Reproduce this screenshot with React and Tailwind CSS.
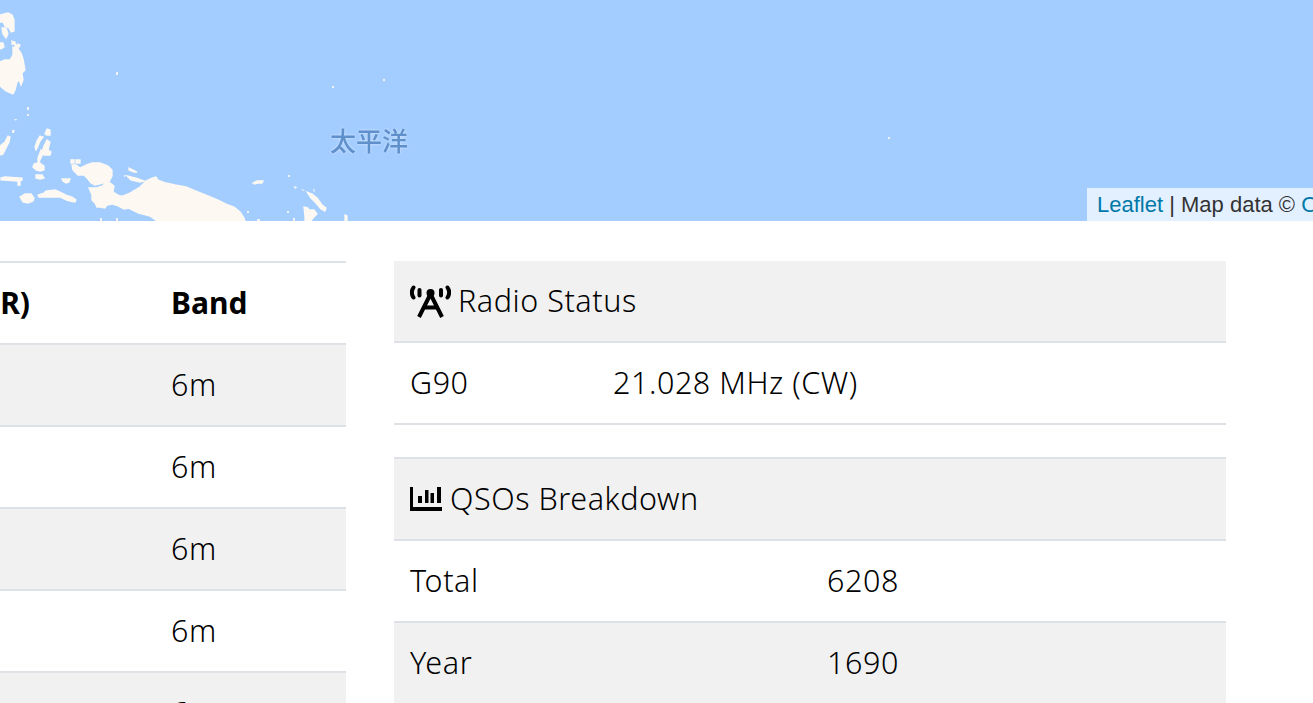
const land = [
  "M0 15L8 13L12 15L14 20L14 31L11 32L9 28L5 26L3 22L0 22Z",
  "M2 28L6 28L8 34L6 38L3 34Z","M0 43L3 43L4 47L1 49L0 48Z","M12 41L15 42L15 44L12 44Z","M15 44L18 46L18 48L15 47Z","M18 44L20 45L19 47Z",
  "M13 47L18 49L21 53L23 59L25 70L22 73L23 80L21 85L19 80L17 82L15 90L13 94L6 91L0 86L0 62L5 60L10 60L13 55Z",
  "M8 136L10 137L9 142L6 148L3 154L1 155L0 154L0 146L5 142Z",
  "M47 129L50 130L50 135L47 135L45 134Z","M40 136L43 137L40 141L38 146L36 150L35 147L37 141Z",
  "M47 140L50 142L48 150L51 152L50 155L44 155L42 152L44 146Z",
  "M41 150L43 153L41 158L39 162L41 164L44 166L44 170L40 171L36 170L33 167L34 164L38 163L38 158Z",
  "M1 178L5 177L22 178L22 180L20 181L20 185L18 185L18 181L1 180Z",
  "M36 175L42 175L44 178L40 179L36 178Z","M62 179L70 179L69 182L66 183L63 181Z",
  "M20 197L25 194L31 194L34 198L33 201L28 203L23 202Z",
  "M38 195L44 193L46 191L55 190L60 192L66 195L72 197L76 200L75 202L70 201L66 200L60 197L55 197L50 197L44 197L39 197Z",
  "M71 160L74 160L74 163L71 163Z","M76 160L80 160L80 163L76 163Z",
  "M72 165L76 165L80 168L86 165L92 163L100 163L108 166L112 170L112 176L109 182L103 183L95 185L91 183L88 179L84 175L78 175L73 170Z",
  "M89 188L96 188L102 186L106 183L110 183L114 186L113 192L118 195L124 197L130 199L130 208L124 209L118 206L112 204L107 205L105 208L100 207L97 207L95 203L92 200L92 195Z",
  "M120 197L130 193L140 187L146 181L152 178L156 177L158 180L166 183L175 185L186 187L196 191L206 195L218 200L226 204L234 207L240 212L244 218L245 221L157 221L150 216L138 213L128 208L120 205Z",
  "M129 168L133 170L137 172L134 172L129 170Z","M127 176L136 178L144 181L140 182L131 180Z",
  "M253 183L257 181L263 181L262 183L258 183L255 184Z",
  "M307 192L312 194L317 198L322 205L326 208L325 211L321 209L316 203L311 198Z",
  "M304 207L308 208L309 210L314 210L317 214L313 218L311 221L305 221L305 217Z","M345 215L347 216L347 221L345 221Z",
];
const dots = [
  "M124 175L125 175L125 177L124 177Z",
  "M288 175L290 175L290 177L288 177Z","M294 186L297 187L296 189L294 188Z","M301 189L305 190L303 191Z","M314 188L315 192L313 191Z",
  "M116 72L118 72L118 75L116 75Z","M27 107L29 107L29 110L27 110Z","M27 114L29 114L29 116L27 116Z","M14 119L17 119L16 121Z","M12 130L15 130L14 133L12 133Z",
  "M383 79L385 79L385 81L383 81Z","M332 86L334 86L334 88L332 88Z","M888 137L890 137L890 139L888 139Z",
  "M247 211L249 211L249 213L247 213Z","M287 211L289 211L289 213L287 213Z","M257 219L260 219L260 221L257 221Z","M293 218L295 218L295 221L293 221Z","M100 218L102 218L102 221L100 221Z","M116 218L118 218L118 221L116 221Z",
];

function Cell({ className = "", children }) {
  return <div className={"flex items-center px-4 pb-[2px] whitespace-nowrap " + className}>{children}</div>;
}

function Tower() {
  return (
    <svg width="41" height="33" viewBox="0 0 41 33" className="mr-[7px] shrink-0" fill="none" stroke="currentColor" strokeWidth="4">
      <path d="M3.5 2.5C1.5 5.5 1.5 9.5 3.5 12.5" strokeLinecap="round" />
      <path d="M9.5 5V10.5" strokeLinecap="round" />
      <path d="M37.5 2.5C39.5 5.5 39.5 9.5 37.5 12.5" strokeLinecap="round" />
      <path d="M31 5V10.5" strokeLinecap="round" />
      <circle cx="20.5" cy="8" r="4" fill="currentColor" stroke="none" />
      <path d="M20.5 9L9 32M20.5 9L32 32M14 22.5H27" />
    </svg>
  );
}

function Bars() {
  return (
    <svg width="33" height="25" viewBox="0 0 33 25" className="mr-[7px] shrink-0" fill="currentColor">
      <path d="M0 0H3V20H32V24H0Z" />
      <rect x="8" y="9" width="4" height="7" />
      <rect x="15" y="3" width="3.5" height="13" />
      <rect x="20.5" y="6" width="3.5" height="10" />
      <rect x="27" y="0" width="4" height="16" />
    </svg>
  );
}

export default function App() {
  const rows = [true, false, true, false, true];
  return (
    <div className="h-[703px] overflow-hidden bg-white text-black text-[30.5px] leading-[40px] tracking-[0.55px] font-[350] font-['Noto_Sans',sans-serif]">
      <div className="relative h-[221px] overflow-hidden bg-[#a3ccff]">
        <svg width="1313" height="221" viewBox="0 0 1313 221" className="block blur-[0.5px]" fill="#fdf9f2">
          <g stroke="#fdf9f2" strokeWidth="1.3">
            {land.map((d, i) => <path key={i} d={d} />)}
          </g>
          <g opacity="0.85">
            {dots.map((d, i) => <path key={i} d={d} />)}
          </g>
        </svg>
        <div className="absolute left-[330px] top-[122px] text-[26px] leading-[35px] tracking-normal font-medium text-[#5f90cb] blur-[0.4px] [text-shadow:0_0_3px_#ffffffa0] font-['Noto_Sans_CJK_SC',sans-serif]">太平洋</div>
        <div className="absolute right-0 bottom-0 h-[33px] w-[226px] overflow-hidden whitespace-nowrap bg-[#e3f0ff] pl-[10px] text-[22px] font-normal leading-[33px] tracking-normal text-[#333] font-['Liberation_Sans',sans-serif]">
          <span className="text-[#0078a8]">Leaflet</span> | Map data © <span className="text-[#0078a8]">OpenStreetMap</span>
        </div>
      </div>

      <div className="flex items-start gap-12 pt-10">
        <div className="w-[346px] shrink-0 overflow-hidden">
          <div className="ml-[-200px] border-t-2 border-[#dee2e6]">
            <div className="flex h-[82px] border-b-2 border-[#dee2e6] font-bold text-[30px] tracking-normal">
              <Cell className="w-[355px] justify-end !pr-[125px] !pb-0">RST (R)</Cell>
              <Cell className="!pb-0">Band</Cell>
            </div>
            {rows.map((gray, i) => (
              <div key={i} className={"flex h-[82px] border-b-2 border-[#dee2e6] " + (gray ? "bg-[#f1f1f1]" : "")}>
                <Cell className="w-[355px]" />
                <Cell>6m</Cell>
              </div>
            ))}
          </div>
        </div>

        <div className="w-[832px] shrink-0">
          <div className="flex h-[82px] items-center border-b-2 border-[#dee2e6] bg-[#f1f1f1] px-4">
            <Tower /><span className="mb-[2px]">Radio Status</span>
          </div>
          <div className="flex h-[82px] border-b-2 border-[#dee2e6]">
            <Cell className="w-[203px]">G90</Cell>
            <Cell>21.028 MHz (CW)</Cell>
          </div>
          <div className="mt-8 flex h-[84px] items-center border-y-2 border-[#dee2e6] bg-[#f1f1f1] px-4">
            <Bars /><span className="mb-[2px]">QSOs Breakdown</span>
          </div>
          <div className="flex h-[82px] border-b-2 border-[#dee2e6]">
            <Cell className="w-[417px]">Total</Cell>
            <Cell>6208</Cell>
          </div>
          <div className="flex h-[82px] border-b-2 border-[#dee2e6] bg-[#f1f1f1]">
            <Cell className="w-[417px]">Year</Cell>
            <Cell>1690</Cell>
          </div>
        </div>
      </div>
    </div>
  );
}
